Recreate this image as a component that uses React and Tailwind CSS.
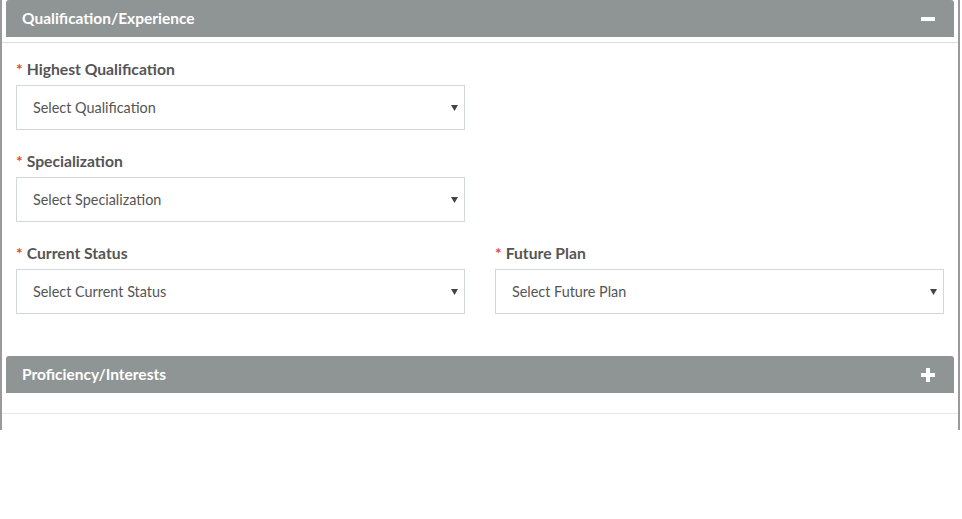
export default function App() {
  const fields = [
    { label: 'Highest Qualification', placeholder: 'Select Qualification' },
    { label: 'Specialization', placeholder: 'Select Specialization' },
  ]

  return (
    <div className="w-[962px] h-[519px] bg-white" style={{ fontFamily: 'Lato, "Open Sans", sans-serif' }}>
      <div className="w-[960px] h-[430px] border-l-2 border-r-2 border-[#9a9a9a]">
        {/* Qualification section */}
        <div className="pb-[5px] border-b border-[#dcdcdc]">
          <div className="mx-[4px] h-[37px] bg-[#8f9494] rounded-t-[3px] flex items-center justify-between pl-[16px] pr-[19px]">
            <span className="text-white font-bold text-[15.5px]">Qualification/Experience</span>
            <span className="w-[14px] h-[4px] bg-white"></span>
          </div>
        </div>

        <div className="pl-[14px] pr-[14px] pt-[16px]">
          {fields.map(f => (
            <div key={f.label} className="w-[449px] mb-[21px]">
              <Field label={f.label} placeholder={f.placeholder} />
            </div>
          ))}
          <div className="grid grid-cols-2 gap-[30px]">
            <Field label="Current Status" placeholder="Select Current Status" />
            <Field label="Future Plan" placeholder="Select Future Plan" />
          </div>
        </div>

        {/* Proficiency section */}
        <div className="mt-[42px] pb-[20px] border-b border-[#e6e6e6]">
          <div className="mx-[4px] h-[37px] bg-[#8f9494] rounded-t-[3px] flex items-center justify-between pl-[16px] pr-[19px]">
            <span className="text-white font-bold text-[15.5px]">Proficiency/Interests</span>
            <svg width="14" height="14" viewBox="0 0 14 14">
              <rect x="5" y="0" width="4" height="14" fill="white" />
              <rect x="0" y="5" width="14" height="4" fill="white" />
            </svg>
          </div>
        </div>
      </div>
    </div>
  )
}

function Field({ label, placeholder }) {
  return (
    <div>
      <div className="h-[21px] mb-[5px] text-[15.7px] font-bold text-[#555] leading-[21px]">
        <span className="text-[#dd4b39] mr-[4px]">*</span>
        {label}
      </div>
      <div className="h-[45px] border border-[#d2d6de] flex items-center justify-between pl-[16px] pr-[6px]">
        <span className="text-[14.4px] text-[#555]">{placeholder}</span>
        <svg width="7" height="6" viewBox="0 0 7 6">
          <path d="M0 0 L7 0 L3.5 6 Z" fill="#444" />
        </svg>
      </div>
    </div>
  )
}
